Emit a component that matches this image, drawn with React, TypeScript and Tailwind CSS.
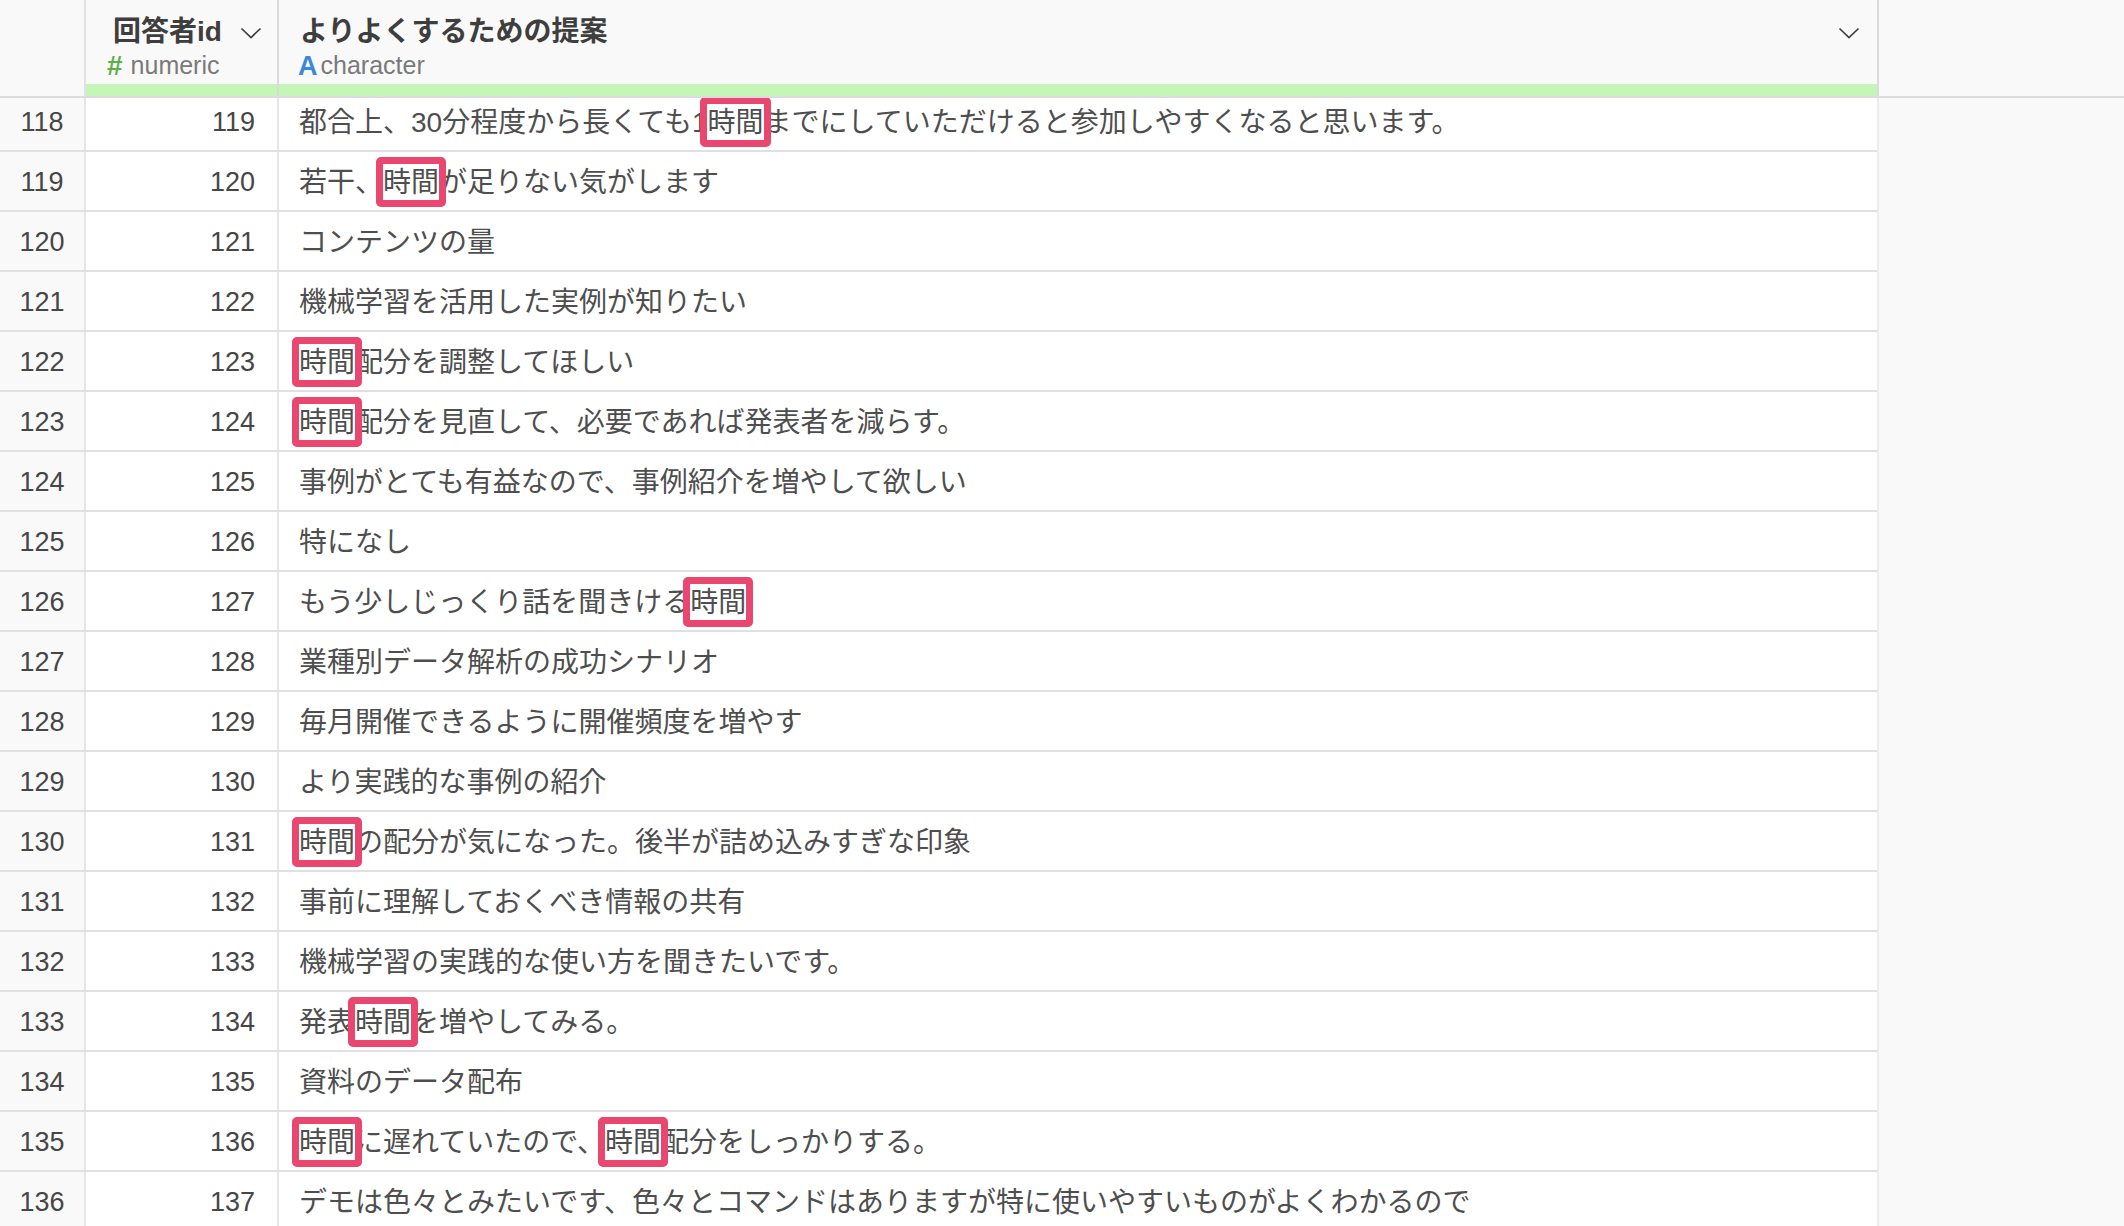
import React from "react";

const rows: [number, number, string][] = [
  [118, 119, "都合上、30分程度から長くても1時間までにしていただけると参加しやすくなると思います。"],
  [119, 120, "若干、時間が足りない気がします"],
  [120, 121, "コンテンツの量"],
  [121, 122, "機械学習を活用した実例が知りたい"],
  [122, 123, "時間配分を調整してほしい"],
  [123, 124, "時間配分を見直して、必要であれば発表者を減らす。"],
  [124, 125, "事例がとても有益なので、事例紹介を増やして欲しい"],
  [125, 126, "特になし"],
  [126, 127, "もう少しじっくり話を聞きける時間"],
  [127, 128, "業種別データ解析の成功シナリオ"],
  [128, 129, "毎月開催できるように開催頻度を増やす"],
  [129, 130, "より実践的な事例の紹介"],
  [130, 131, "時間の配分が気になった。後半が詰め込みすぎな印象"],
  [131, 132, "事前に理解しておくべき情報の共有"],
  [132, 133, "機械学習の実践的な使い方を聞きたいです。"],
  [133, 134, "発表時間を増やしてみる。"],
  [134, 135, "資料のデータ配布"],
  [135, 136, "時間に遅れていたので、時間配分をしっかりする。"],
  [136, 137, "デモは色々とみたいです、色々とコマンドはありますが特に使いやすいものがよくわかるので"],
];

const KEYWORD = "時間";

function Chevron() {
  return (
    <svg width="22" height="12" viewBox="0 0 22 12" fill="none">
      <polyline points="1.5,1.5 11,10.5 20.5,1.5" stroke="#3f3f3f" strokeWidth="1.7" />
    </svg>
  );
}

function Highlighted({ text }: { text: string }) {
  const parts = text.split(KEYWORD);
  return (
    <>
      {parts.map((p, i) => (
        <React.Fragment key={i}>
          {p}
          {i < parts.length - 1 && (
            <span className="relative">
              {KEYWORD}
              <span className="absolute -left-[7px] -right-[7px] top-1/2 -translate-y-1/2 h-[50px] border-[7px] border-[#e9476f] rounded-[5px]" />
            </span>
          )}
        </React.Fragment>
      ))}
    </>
  );
}

export default function App() {
  return (
    <div className="w-[2124px] h-[1226px] overflow-hidden bg-[#f9f9f9] flex flex-col font-['Liberation_Sans','Noto_Sans_CJK_JP',sans-serif]">
      {/* header */}
      <div className="flex h-[98px] shrink-0 border-b-2 border-[#dcdcdc]">
        <div className="w-[86px] border-r-2 border-[#e2e2e2]" />
        <div className="w-[193px] border-r-2 border-[#dadada] flex flex-col">
          <div className="h-[84px] pt-[14px]">
            <div className="flex items-center h-[36px] pl-[27px] text-[28px] font-bold text-[#3e3e3e]">
              <span>回答者id</span>
              <span className="ml-[18px] mt-[2px]">
                <Chevron />
              </span>
            </div>
            <div className="flex items-center h-[26px] mt-[3px] pl-[21px] text-[25px]">
              <span className="font-bold text-[28px] text-[#5eae4a]">#</span>
              <span className="ml-[8px] text-[#7a7a7a]">numeric</span>
            </div>
          </div>
          <div className="h-[12px] bg-[#c5f5b7]" />
        </div>
        <div className="w-[1600px] border-r-2 border-[#dadada] flex flex-col">
          <div className="h-[84px] pt-[14px]">
            <div className="flex items-center justify-between h-[36px] pl-[21px] pr-[17px] text-[28px] font-bold text-[#3e3e3e]">
              <span>よりよくするための提案</span>
              <span className="mt-[2px]">
                <Chevron />
              </span>
            </div>
            <div className="flex items-center h-[26px] mt-[3px] pl-[19px] text-[25px]">
              <span className="font-bold text-[27px] text-[#3a88d8]">A</span>
              <span className="ml-[3px] text-[#7a7a7a]">character</span>
            </div>
          </div>
          <div className="h-[12px] bg-[#c5f5b7]" />
        </div>
        <div className="flex-1" />
      </div>

      {/* body */}
      <div className="flex-1 overflow-hidden flex">
        <div className="w-[1879px] border-r-2 border-[#ececec]">
          <div className="-mt-[6px]">
            {rows.map(([n, id, text]) => (
              <div key={n} className="flex h-[60px] border-b-2 border-[#e0e0e0]">
                <div className="w-[86px] border-r-2 border-[#e6e6e6] bg-[#f9f9f9] flex items-center justify-center pt-[2px] text-[27px] text-[#464646]">
                  {n}
                </div>
                <div className="w-[193px] border-r-2 border-[#e6e6e6] bg-white flex items-center justify-end pr-[22px] pt-[2px] text-[27px] text-[#464646]">
                  {id}
                </div>
                <div className="flex-1 bg-white flex items-center pl-[20px] pt-[3px] text-[28px] text-[#4e4e4e] whitespace-nowrap">
                  <span>
                    <Highlighted text={text} />
                  </span>
                </div>
              </div>
            ))}
          </div>
        </div>
        <div className="flex-1 bg-[#f9f9f9]" />
      </div>
    </div>
  );
}
